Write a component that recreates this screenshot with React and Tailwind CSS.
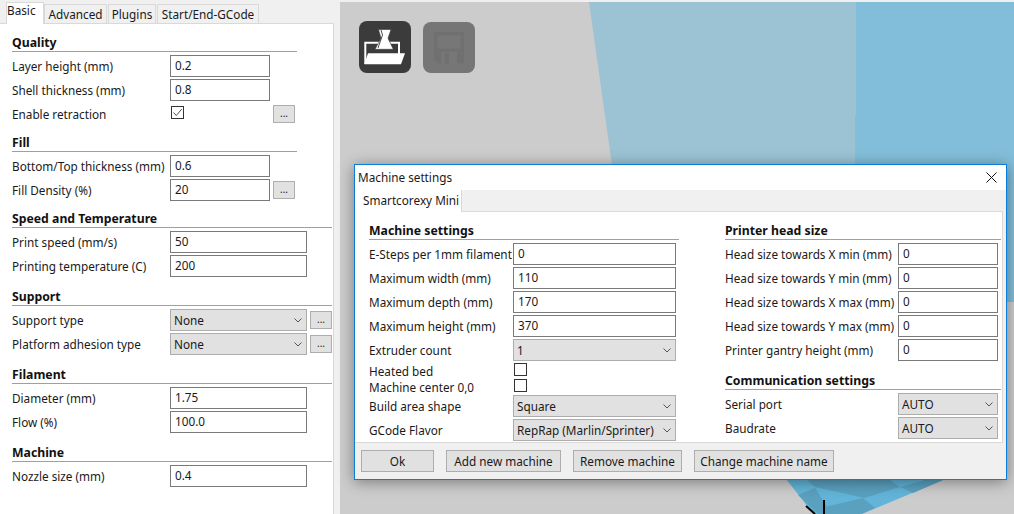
import React from 'react';

const Chevron = () => (
  <svg width="8" height="5" viewBox="0 0 8 5" className="absolute right-[4px] top-[8px]">
    <path d="M0.5 0.5 L4 4 L7.5 0.5" fill="none" stroke="#555" strokeWidth="1" />
  </svg>
);

const Heading = ({ title, ruleW, first }) => (
  <div className={`flex items-end ${first ? 'h-[28px]' : 'h-[27px]'}`}>
    <div className={`border-b border-[#a0a0a0] ${ruleW}`}>
      <div className="font-bold text-[12.25px] leading-4 h-4 text-[#111] whitespace-nowrap">{title}</div>
    </div>
  </div>
);

const TextBox = ({ value, w }) => (
  <div className={`${w} h-[22px] shrink-0 border border-[#7a7a7a] bg-white pl-[4px] leading-[19px]`}>{value}</div>
);

const Select = ({ value, w }) => (
  <div className={`${w} h-[22px] shrink-0 relative border border-[#adadad] bg-[#e1e1e1] pl-[3px] leading-[20px]`}>
    {value}
    <Chevron />
  </div>
);

const MoreBtn = ({ ml }) => (
  <div className={`${ml} w-[22px] h-[18px] border border-[#adadad] bg-[#e1e1e1] text-center leading-[15px] text-[10px]`}>...</div>
);

const CheckBox = ({ checked }) => (
  <div className="w-[13px] h-[13px] border border-[#333] bg-white ml-[1px] -mt-[3px]">
    {checked && (
      <svg width="11" height="11" viewBox="0 0 11 11">
        <path d="M1.5 5.5 L4.3 8.5 L9.8 2" fill="none" stroke="#555" strokeWidth="1" />
      </svg>
    )}
  </div>
);

const Row = ({ label, labelW, children, h = 'h-[22px] mb-[2px]' }) => (
  <div className={`flex items-center ${h}`}>
    <div className={`${labelW} shrink-0 whitespace-nowrap pt-[2px]`}>{label}</div>
    {children}
  </div>
);

const TopTab = ({ label, w }) => (
  <div className={`${w} h-[19px] mr-px border border-b-0 border-[#d9d9d9] bg-[#f0f0f0] text-center leading-[18px]`}>{label}</div>
);

const SidePanel = () => {
  const L = 'w-[158px]';
  return (
    <div className="w-[340px] h-full flex flex-col bg-[#f0f0f0]">
      <div className="flex items-end h-[21px] pl-[6px] shrink-0">
        <div className="w-[38px] h-[22px] -mb-px relative z-10 border border-b-0 border-[#d9d9d9] bg-white leading-[15px]">Basic</div>
        <TopTab label="Advanced" w="w-[63px]" />
        <TopTab label="Plugins" w="w-[48px]" />
        <TopTab label="Start/End-GCode" w="w-[102px]" />
      </div>
      <div className="w-[334px] flex-1 bg-white border-t border-r border-[#d9d9d9] pl-[12px]">
        <Heading title="Quality" ruleW="w-[285px]" first />
        <div className="mt-[3px]">
          <Row label="Layer height (mm)" labelW={L}><TextBox value="0.2" w="w-[100px]" /></Row>
          <Row label="Shell thickness (mm)" labelW={L}><TextBox value="0.8" w="w-[100px]" /></Row>
          <Row label="Enable retraction" labelW={L} h="h-[22px]">
            <CheckBox checked />
            <MoreBtn ml="ml-[89px]" />
          </Row>
        </div>
        <Heading title="Fill" ruleW="w-[285px]" />
        <div className="mt-[3px]">
          <Row label="Bottom/Top thickness (mm)" labelW={L}><TextBox value="0.6" w="w-[100px]" /></Row>
          <Row label="Fill Density (%)" labelW={L} h="h-[22px]">
            <TextBox value="20" w="w-[100px]" />
            <MoreBtn ml="ml-[3px]" />
          </Row>
        </div>
        <Heading title="Speed and Temperature" ruleW="w-[320px]" />
        <div className="mt-[3px]">
          <Row label="Print speed (mm/s)" labelW={L}><TextBox value="50" w="w-[137px]" /></Row>
          <Row label="Printing temperature (C)" labelW={L}><TextBox value="200" w="w-[137px]" /></Row>
        </div>
        <Heading title="Support" ruleW="w-[320px]" />
        <div className="mt-[3px]">
          <Row label="Support type" labelW={L}>
            <Select value="None" w="w-[137px]" />
            <MoreBtn ml="ml-[3px]" />
          </Row>
          <Row label="Platform adhesion type" labelW={L}>
            <Select value="None" w="w-[137px]" />
            <MoreBtn ml="ml-[3px]" />
          </Row>
        </div>
        <Heading title="Filament" ruleW="w-[320px]" />
        <div className="mt-[3px]">
          <Row label="Diameter (mm)" labelW={L}><TextBox value="1.75" w="w-[137px]" /></Row>
          <Row label="Flow (%)" labelW={L}><TextBox value="100.0" w="w-[137px]" /></Row>
        </div>
        <Heading title="Machine" ruleW="w-[320px]" />
        <div className="mt-[3px]">
          <Row label="Nozzle size (mm)" labelW={L}><TextBox value="0.4" w="w-[137px]" /></Row>
        </div>
      </div>
    </div>
  );
};

const LoadIcon = () => (
  <svg width="52" height="52" viewBox="0 0 52 52">
    <path d="M6.3 43 V21.7 H40 V33" fill="none" stroke="#fff" strokeWidth="2" />
    <path d="M9 32.3 H46 L42 43.3 H5.3 Z" fill="#fff" />
    <path d="M19.5 8.5 H32 L29 17.3 L34.3 28.3 H16 L22 17.3 Z" fill="#fff" stroke="#3b3b3b" strokeWidth="0.6" />
    <path d="M22 9 L23.5 14 L19 27" fill="none" stroke="#3b3b3b" strokeWidth="0.9" />
  </svg>
);

const SaveIcon = () => (
  <svg width="52" height="51" viewBox="0 0 52 51">
    <path d="M11 10 H41 V41.3 H15 L11 38 Z" fill="#707070" />
    <rect x="14.3" y="13.3" width="23.4" height="13.4" fill="#777" />
    <rect x="18" y="29.7" width="16" height="11.6" fill="#777" />
    <rect x="22" y="31" width="4" height="10.3" fill="#707070" />
  </svg>
);

const Scene = () => (
  <svg className="absolute inset-0 w-full h-full" viewBox="340 2 674 512">
    <polygon points="589,2 856,2 856,300 631,300" fill="#9bc3d4" />
    <rect x="856" y="2" width="158" height="114" fill="#82bed9" />
    <rect x="855" y="116" width="159" height="186" fill="#82bed9" />
    <polygon points="779,470 967,470 862,514 813.5,514" fill="#62b4d8" />
    <polygon points="807,480 848,480 865,498 815,487" fill="#5aa0bf" />
    <polygon points="848,480 890,480 900,487 864,498" fill="#5aa0bf" />
    <polygon points="798,495 815,488 827,507 832,514 818,514" fill="#5aa0bf" />
    <polygon points="825,507 863,498 875,508 861,514 830,514" fill="#5aa0bf" />
    <polygon points="900,487 925,480 943,480 913,493" fill="#5aa0bf" />
    <path d="M824 500 V514" stroke="#000" strokeWidth="2" />
    <path d="M806 506 L815 514" stroke="#000" strokeWidth="2" />
  </svg>
);

const Btn = ({ label, w }) => (
  <div className={`${w} h-[22px] border border-[#adadad] bg-[#e1e1e1] text-center leading-[21px]`}>{label}</div>
);

const MachineDialog = () => {
  const LL = 'w-[144px]';
  const RL = 'w-[173px]';
  return (
    <div className="absolute left-[14px] top-[162px] w-[653px] h-[316px] border border-[#0a7ddb] bg-[#f0f0f0] flex flex-col shadow-[0_2px_14px_rgba(0,0,0,0.4)]">
      <div className="h-[25px] bg-white flex items-center justify-between pl-[3px] pr-[9px] shrink-0">
        <span>Machine settings</span>
        <svg width="11" height="11" viewBox="0 0 11 11">
          <path d="M0.5 0.5 L10.5 10.5 M10.5 0.5 L0.5 10.5" stroke="#111" strokeWidth="1" />
        </svg>
      </div>
      <div className="h-[21px] shrink-0 flex items-end">
        <div className="w-[107px] h-[22px] -mb-px relative z-10 bg-white border-r border-[#d9d9d9] pl-[8px] leading-[20px]">Smartcorexy Mini</div>
      </div>
      <div className="w-[648px] h-[232px] bg-white border-t border-r border-b border-[#d9d9d9] flex pl-[14px] shrink-0">
        <div className="w-[310px]">
          <Heading title="Machine settings" ruleW="w-[310px]" first />
          <div className="mt-[3px]">
            <Row label="E-Steps per 1mm filament" labelW={LL}><TextBox value="0" w="w-[163px]" /></Row>
            <Row label="Maximum width (mm)" labelW={LL}><TextBox value="110" w="w-[163px]" /></Row>
            <Row label="Maximum depth (mm)" labelW={LL}><TextBox value="170" w="w-[163px]" /></Row>
            <Row label="Maximum height (mm)" labelW={LL}><TextBox value="370" w="w-[163px]" /></Row>
            <Row label="Extruder count" labelW={LL}><Select value="1" w="w-[163px]" /></Row>
            <Row label="Heated bed" labelW={LL} h="h-[16px]"><CheckBox /></Row>
            <Row label="Machine center 0,0" labelW={LL} h="h-[16px]"><CheckBox /></Row>
            <Row label="Build area shape" labelW={LL}><Select value="Square" w="w-[163px]" /></Row>
            <Row label="GCode Flavor" labelW={LL} h="h-[22px]"><Select value="RepRap (Marlin/Sprinter)" w="w-[163px]" /></Row>
          </div>
        </div>
        <div className="w-[276px] ml-[46px]">
          <Heading title="Printer head size" ruleW="w-[276px]" first />
          <div className="mt-[3px]">
            <Row label="Head size towards X min (mm)" labelW={RL}><TextBox value="0" w="w-[100px]" /></Row>
            <Row label="Head size towards Y min (mm)" labelW={RL}><TextBox value="0" w="w-[100px]" /></Row>
            <Row label="Head size towards X max (mm)" labelW={RL}><TextBox value="0" w="w-[100px]" /></Row>
            <Row label="Head size towards Y max (mm)" labelW={RL}><TextBox value="0" w="w-[100px]" /></Row>
            <Row label="Printer gantry height (mm)" labelW={RL}><TextBox value="0" w="w-[100px]" /></Row>
          </div>
          <Heading title="Communication settings" ruleW="w-[276px]" />
          <div className="mt-[3px]">
            <Row label="Serial port" labelW={RL}><Select value="AUTO" w="w-[100px]" /></Row>
            <Row label="Baudrate" labelW={RL}><Select value="AUTO" w="w-[100px]" /></Row>
          </div>
        </div>
      </div>
      <div className="flex-1 flex items-center gap-[12px] pl-[6px]">
        <Btn label="Ok" w="w-[73px]" />
        <Btn label="Add new machine" w="w-[115px]" />
        <Btn label="Remove machine" w="w-[109px]" />
        <Btn label="Change machine name" w="w-[140px]" />
      </div>
    </div>
  );
};

export default function App() {
  return (
    <div className="w-[1014px] h-[514px] flex flex-col overflow-hidden text-[11.75px] text-[#1a1a1a] font-['Noto_Sans',sans-serif]">
      <div className="h-[2px] bg-[#f0f0f0] shrink-0" />
      <div className="flex-1 flex min-h-0">
        <SidePanel />
        <div className="flex-1 relative bg-[#cccccc]">
          <Scene />
          <div className="absolute left-[19px] top-[19px] flex gap-[12px]">
            <div className="w-[52px] h-[52px] rounded-lg bg-[#3b3b3b]"><LoadIcon /></div>
            <div className="w-[52px] h-[51px] mt-px rounded-lg bg-[#767676]"><SaveIcon /></div>
          </div>
          <MachineDialog />
        </div>
      </div>
    </div>
  );
}
